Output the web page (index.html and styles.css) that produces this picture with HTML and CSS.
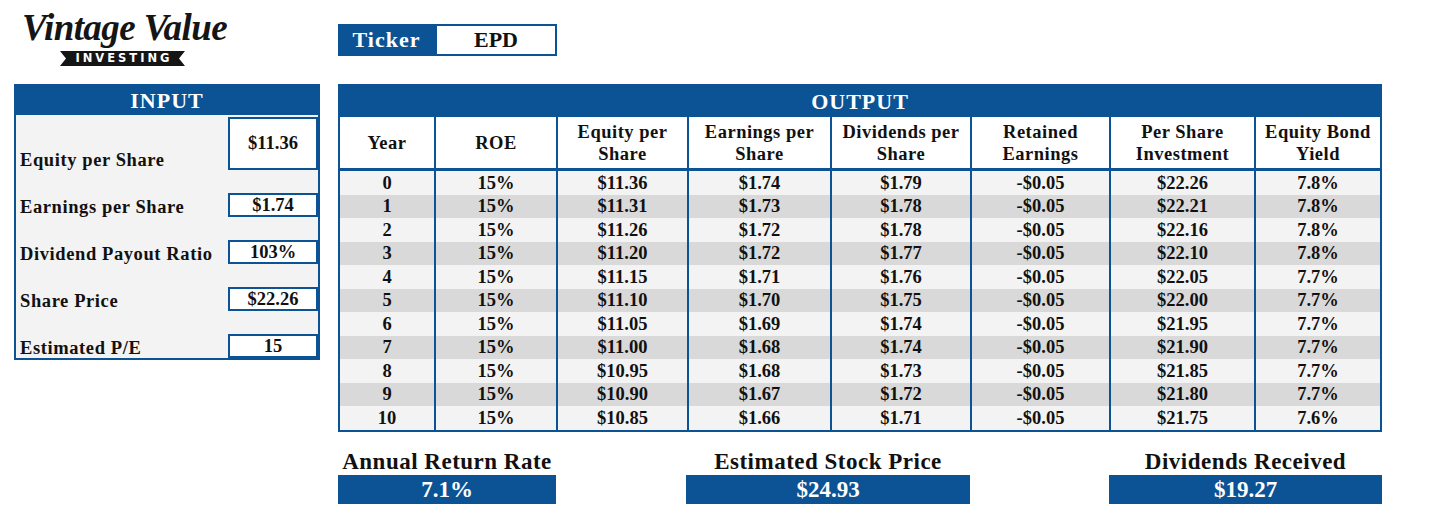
FILE: index.html
```html
<!DOCTYPE html>
<html lang="en">
<head>
<meta charset="utf-8">
<title>Vintage Value Investing - EPD</title>
<link rel="stylesheet" href="styles.css">
</head>
<body>
<div class="page">
  <div class="left">
    <div class="logo">
      <div class="logo-script">Vintage Value</div>
      <div class="logo-banner">INVESTING</div>
    </div>
    <section class="input-panel">
      <h2 class="panel-title">INPUT</h2>
      <div class="input-body">
        <div class="in-row tall"><span class="in-label">Equity per Share</span><span class="in-value">$11.36</span></div>
        <div class="in-row"><span class="in-label">Earnings per Share</span><span class="in-value">$1.74</span></div>
        <div class="in-row"><span class="in-label">Dividend Payout Ratio</span><span class="in-value">103%</span></div>
        <div class="in-row"><span class="in-label">Share Price</span><span class="in-value">$22.26</span></div>
        <div class="in-row"><span class="in-label">Estimated P/E</span><span class="in-value">15</span></div>
      </div>
    </section>
  </div>
  <div class="right">
    <div class="ticker"><span class="ticker-label">Ticker</span><span class="ticker-value">EPD</span></div>
    <section class="output-panel">
      <h2 class="panel-title title-out">OUTPUT</h2>
      <div class="trow thead">
        <div>Year</div><div>ROE</div><div>Equity per<br>Share</div><div>Earnings per<br>Share</div><div>Dividends per<br>Share</div><div>Retained<br>Earnings</div><div>Per Share<br>Investment</div><div>Equity Bond<br>Yield</div>
      </div>
      <div class="trow data"><div>0</div><div>15%</div><div>$11.36</div><div>$1.74</div><div>$1.79</div><div>-$0.05</div><div>$22.26</div><div>7.8%</div></div>
      <div class="trow data alt"><div>1</div><div>15%</div><div>$11.31</div><div>$1.73</div><div>$1.78</div><div>-$0.05</div><div>$22.21</div><div>7.8%</div></div>
      <div class="trow data"><div>2</div><div>15%</div><div>$11.26</div><div>$1.72</div><div>$1.78</div><div>-$0.05</div><div>$22.16</div><div>7.8%</div></div>
      <div class="trow data alt"><div>3</div><div>15%</div><div>$11.20</div><div>$1.72</div><div>$1.77</div><div>-$0.05</div><div>$22.10</div><div>7.8%</div></div>
      <div class="trow data"><div>4</div><div>15%</div><div>$11.15</div><div>$1.71</div><div>$1.76</div><div>-$0.05</div><div>$22.05</div><div>7.7%</div></div>
      <div class="trow data alt"><div>5</div><div>15%</div><div>$11.10</div><div>$1.70</div><div>$1.75</div><div>-$0.05</div><div>$22.00</div><div>7.7%</div></div>
      <div class="trow data"><div>6</div><div>15%</div><div>$11.05</div><div>$1.69</div><div>$1.74</div><div>-$0.05</div><div>$21.95</div><div>7.7%</div></div>
      <div class="trow data alt"><div>7</div><div>15%</div><div>$11.00</div><div>$1.68</div><div>$1.74</div><div>-$0.05</div><div>$21.90</div><div>7.7%</div></div>
      <div class="trow data"><div>8</div><div>15%</div><div>$10.95</div><div>$1.68</div><div>$1.73</div><div>-$0.05</div><div>$21.85</div><div>7.7%</div></div>
      <div class="trow data alt"><div>9</div><div>15%</div><div>$10.90</div><div>$1.67</div><div>$1.72</div><div>-$0.05</div><div>$21.80</div><div>7.7%</div></div>
      <div class="trow data"><div>10</div><div>15%</div><div>$10.85</div><div>$1.66</div><div>$1.71</div><div>-$0.05</div><div>$21.75</div><div>7.6%</div></div>
    </section>
    <div class="summary">
      <div class="sum sum-a"><div class="sum-label">Annual Return Rate</div><div class="sum-value">7.1%</div></div>
      <div class="sum sum-b"><div class="sum-label">Estimated Stock Price</div><div class="sum-value">$24.93</div></div>
      <div class="sum sum-c"><div class="sum-label">Dividends Received</div><div class="sum-value">$19.27</div></div>
    </div>
  </div>
</div>
</body>
</html>
```
FILE: styles.css
```css
body {
  margin: 0;
  background: #ffffff;
  font-family: "Liberation Serif", "Times New Roman", serif;
  font-weight: 700;
  color: #111111;
}

.page {
  display: flex;
  gap: 18px;
  padding-left: 14px;
}

.left {
  width: 306px;
}

.logo {
  height: 84px;
  box-sizing: border-box;
  padding: 8px 0 0 8px;
}

.logo-script {
  font-style: italic;
  font-size: 37px;
  line-height: 40px;
  letter-spacing: -0.6px;
  color: #151515;
}

.logo-banner {
  margin: 3px 0 0 38px;
  width: 125px;
  height: 15px;
  background: #151515;
  color: #ffffff;
  font-family: "DejaVu Sans", "Liberation Sans", sans-serif;
  font-weight: 700;
  font-size: 11.5px;
  line-height: 15px;
  letter-spacing: 3px;
  text-indent: 3px;
  text-align: center;
  clip-path: polygon(0 0, 100% 0, calc(100% - 6px) 50%, 100% 100%, 0 100%, 6px 50%);
}

.panel-title {
  margin: 0;
  background: #0b5394;
  color: #ffffff;
  text-align: center;
  font-size: 22px;
  font-weight: 700;
  letter-spacing: 1px;
  height: 29px;
  line-height: 30px;
}

.input-panel {
  border: 2px solid #0b5394;
  background: #f3f3f3;
}

.input-body {
  display: flex;
  flex-direction: column;
  gap: 23px;
  padding-top: 2px;
}

.in-row {
  display: flex;
  align-items: flex-end;
  justify-content: space-between;
  height: 24px;
}

.in-row.tall {
  height: 53px;
}

.in-label {
  padding-left: 4px;
  font-size: 18.5px;
  line-height: 20px;
  letter-spacing: 0.6px;
}

.in-value {
  width: 90px;
  height: 100%;
  box-sizing: border-box;
  border: 2px solid #0b5394;
  background: #ffffff;
  display: flex;
  align-items: center;
  justify-content: center;
  font-size: 18.5px;
}

.right {
  width: 1044px;
}

.ticker {
  display: flex;
  margin-top: 24px;
  width: 219px;
  height: 32px;
}

.ticker-label {
  width: 97px;
  background: #0b5394;
  color: #ffffff;
  font-size: 22px;
  letter-spacing: 1px;
  display: flex;
  align-items: center;
  justify-content: center;
}

.ticker-value {
  flex: 1;
  border: 2px solid #0b5394;
  background: #ffffff;
  font-size: 22px;
  display: flex;
  align-items: center;
  justify-content: center;
}

.output-panel {
  margin-top: 28px;
  border: 2px solid #0b5394;
}

.title-out {
  height: 31px;
  line-height: 32px;
}

.trow {
  display: grid;
  grid-template-columns: 94px 120px 129px 141px 138px 137px 143px 124px;
  column-gap: 2px;
  background: #0b5394;
  font-size: 18.5px;
}

.trow > div {
  display: flex;
  align-items: center;
  justify-content: center;
  text-align: center;
  background: #f3f3f3;
}

.thead {
  height: 51px;
  border-bottom: 3px solid #0b5394;
  letter-spacing: 0.5px;
}

.thead > div {
  background: #ffffff;
  line-height: 22px;
}

.data {
  height: 23.5px;
  line-height: 20px;
}

.data.alt > div {
  background: #d9d9d9;
}

.summary {
  display: grid;
  grid-template-columns: 218px 130px 284px 139px 273px;
  margin-top: 17px;
}

.sum-a { grid-column: 1; }
.sum-b { grid-column: 3; }
.sum-c { grid-column: 5; }

.sum-label {
  text-align: center;
  font-size: 23px;
  line-height: 26px;
  letter-spacing: 0.5px;
  white-space: nowrap;
}

.sum-value {
  height: 29px;
  background: #0b5394;
  color: #ffffff;
  text-align: center;
  font-size: 23px;
  line-height: 30px;
}
```
